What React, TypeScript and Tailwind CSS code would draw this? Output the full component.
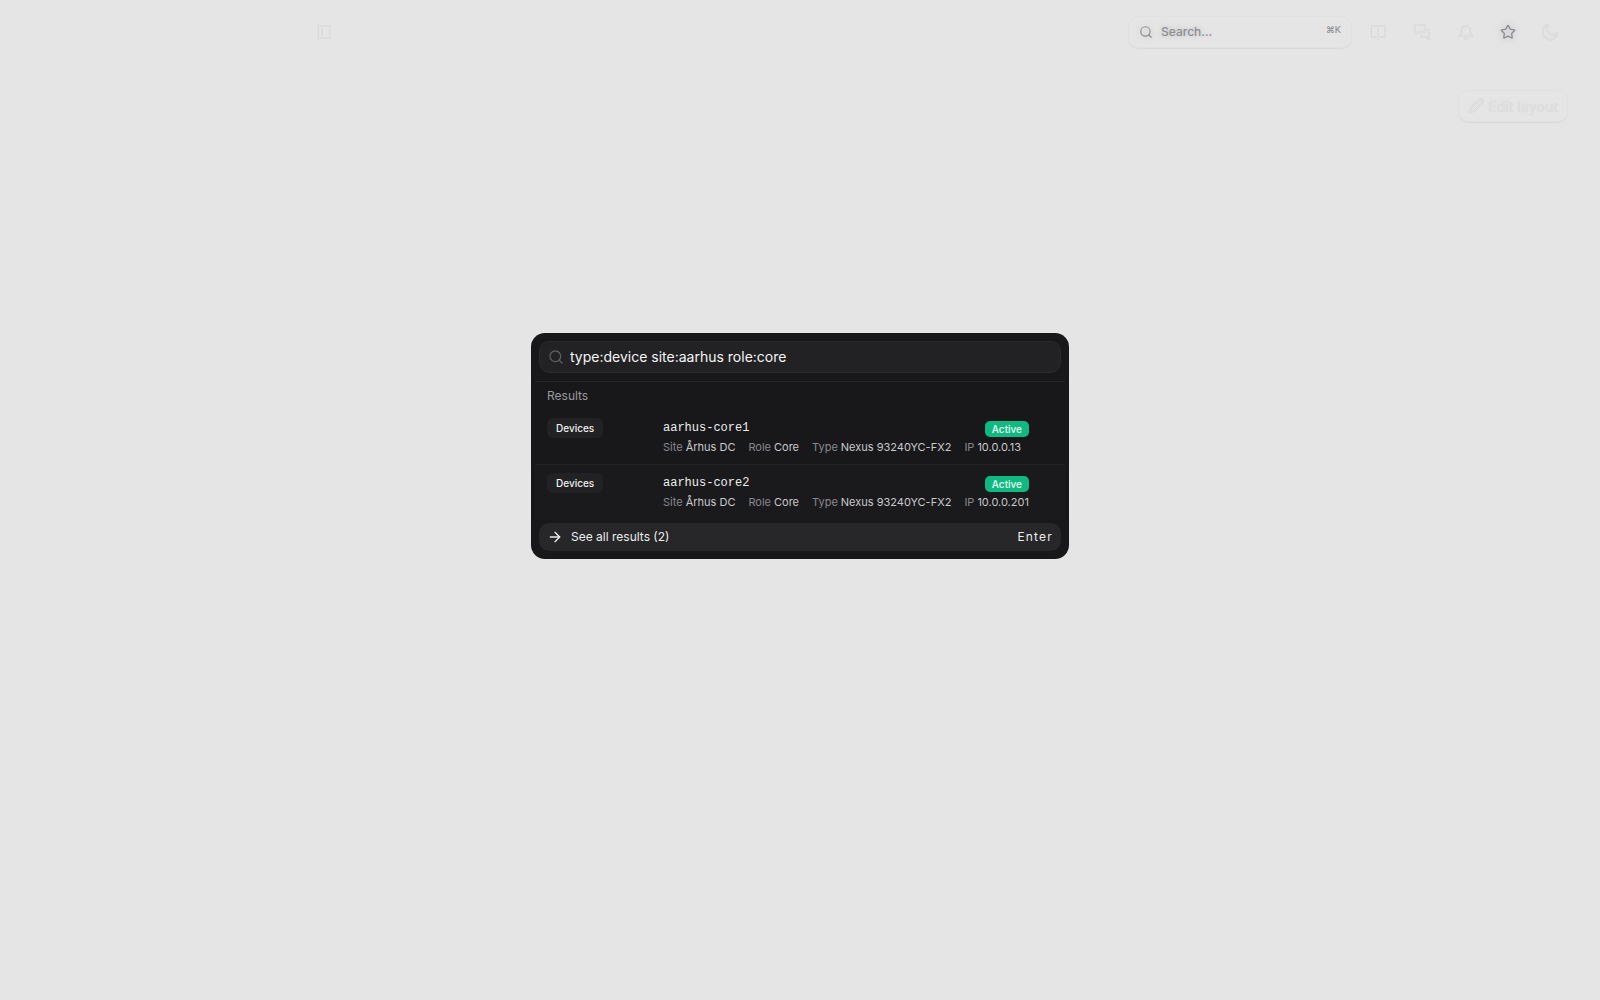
import { ArrowRight, Search, Star } from 'lucide-react';

interface Device {
  name: string;
  status: string;
  fields: { label: string; value: string }[];
}

const DEVICES: Device[] = [
  {
    name: 'aarhus-core1',
    status: 'Active',
    fields: [
      { label: 'Site', value: 'Århus DC' },
      { label: 'Role', value: 'Core' },
      { label: 'Type', value: 'Nexus 93240YC-FX2' },
      { label: 'IP', value: '10.0.0.13' },
    ],
  },
  {
    name: 'aarhus-core2',
    status: 'Active',
    fields: [
      { label: 'Site', value: 'Århus DC' },
      { label: 'Role', value: 'Core' },
      { label: 'Type', value: 'Nexus 93240YC-FX2' },
      { label: 'IP', value: '10.0.0.201' },
    ],
  },
];

// Icon set of the dimmed page behind the dialog
const ICON_PATHS = {
  panel: ['M2 2h12v12H2z', 'M6 2v12'],
  book: ['M8 3v12', 'M1 2h6l1 1 1-1h6v11H9l-1 1-1-1H1z'],
  chat: [
    'M2 1h8a1 1 0 0 1 1 1v5a1 1 0 0 1-1 1H5l-3 2-1-1V2a1 1 0 0 1 1-1z',
    'M13 6h1a1 1 0 0 1 1 1v8l-2.5-2H8a1 1 0 0 1-1-1v-1',
  ],
  bell: ['M4 6a4 4 0 0 1 8 0c0 4 2 4 2.5 6h-13C2 10 4 10 4 6z', 'M6.5 14.5a1.6 1.6 0 0 0 3 0'],
  moon: ['M7 0.5a7.5 7.5 0 1 0 8.5 8.5 4.5 4.5 0 0 1-8.5-8.5z'],
  pencil: ['M2 14l1-4 8-8a1.8 1.8 0 0 1 3 3l-8 8z'],
};

// Drawn twice, so that only the edges of each stroke stand out
function GhostIcon({ name }: { name: keyof typeof ICON_PATHS }) {
  return (
    <svg
      viewBox="0 0 16 16"
      className="size-4 shrink-0 overflow-visible"
      fill="none"
      strokeLinecap="round"
      strokeLinejoin="round"
      aria-hidden="true"
    >
      {ICON_PATHS[name].map((d) => (
        <path key={d} d={d} stroke="#d5d5d5" strokeWidth="2" />
      ))}
      {ICON_PATHS[name].map((d) => (
        <path key={d} d={d} stroke="#e5e5e5" strokeWidth="1" />
      ))}
    </svg>
  );
}

const iconButton = 'flex size-9 items-center justify-center rounded-lg';

function Header() {
  return (
    <header className="flex h-16 items-center justify-between pr-8 pl-[306px]">
      <button type="button" aria-label="Toggle sidebar" className={iconButton}>
        <GhostIcon name="panel" />
      </button>
      <div className="flex items-center gap-2">
        <button
          type="button"
          className="flex h-8 w-56 items-center gap-2 rounded-[10px] border border-[#e1e1e1] px-[10px] text-[12px] font-medium text-[#8e8e92] shadow-2xs"
        >
          <Search className="size-[14px] drop-shadow-[0_0_3px_rgba(0,0,0,0.15)]" />
          <span className="text-shadow-[0_0_6px_rgba(0,0,0,0.2)]">Search...</span>
          <kbd className="mb-1 ml-auto font-['Inter',sans-serif] text-[9px]">⌘K</kbd>
        </button>
        <button type="button" aria-label="Documentation" className={iconButton}>
          <GhostIcon name="book" />
        </button>
        <button type="button" aria-label="Messages" className={iconButton}>
          <GhostIcon name="chat" />
        </button>
        <div className="flex items-center gap-1.5">
          <button type="button" aria-label="Notifications" className={iconButton}>
            <GhostIcon name="bell" />
          </button>
          <button type="button" aria-label="Favourites" className={iconButton}>
            <Star className="size-4 text-[#8a8a92] drop-shadow-[0_0_4px_rgba(0,0,0,0.2)]" />
          </button>
          <button type="button" aria-label="Dark mode" className={iconButton}>
            <GhostIcon name="moon" />
          </button>
        </div>
      </div>
    </header>
  );
}

function DeviceRow({ device }: { device: Device }) {
  return (
    <li className="flex h-[55px] border-b border-[#222225] px-3 pt-2 last:border-b-0 last:bg-[#1a1a1c]">
      <div className="w-[116px] shrink-0">
        <span className="flex h-5 w-fit items-center rounded-md bg-[#222224] px-[9px] text-[10px] font-medium text-[#f0f0f0]">
          Devices
        </span>
      </div>
      <div className="min-w-0 flex-1 pt-px pr-6">
        <div className="flex h-[18px] items-center justify-between">
          <span className="font-['Liberation_Mono',monospace] text-[12px] text-[#ededee]">{device.name}</span>
          <span className="mt-0.5 flex h-4 items-center rounded-[5px] bg-[#10b981] px-[7px] text-[10px] font-medium text-[#e9fff6]">
            {device.status}
          </span>
        </div>
        <dl className="flex gap-[13px] text-[11px] leading-5 whitespace-nowrap">
          {device.fields.map((field) => (
            <div key={field.label} className="flex gap-[3px]">
              <dt className="text-[#88888d]">{field.label}</dt>
              <dd className="text-[#c9c9cc]">{field.value}</dd>
            </div>
          ))}
        </dl>
      </div>
    </li>
  );
}

function SearchDialog() {
  return (
    <div
      role="dialog"
      aria-label="Search"
      className="fixed top-1/3 left-1/2 w-[538px] max-w-full -translate-x-1/2 rounded-[14px] bg-[#18181a] p-2"
    >
      <label className="flex h-8 items-center gap-1.5 rounded-[10px] border border-[#29292b] bg-[#222224] px-2">
        <Search className="size-4 text-[#5d5d62]" />
        <input
          type="text"
          aria-label="Search query"
          defaultValue="type:device site:aarhus role:core"
          className="h-5 min-w-0 flex-1 bg-transparent text-[14px] leading-5 text-[#f5f5f5] outline-none"
        />
      </label>
      <div className="-mx-1 mt-2 border-t border-[#262629]">
        <h2 className="px-3 pt-1 text-[12px] leading-5 text-[#98989d]">Results</h2>
        <ul className="pt-1">
          {DEVICES.map((device) => (
            <DeviceRow key={device.name} device={device} />
          ))}
        </ul>
      </div>
      <button
        type="button"
        className="mt-[3px] flex h-7 w-full items-center gap-2 rounded-[10px] bg-[#272729] px-2 text-[12px] text-[#ededee]"
      >
        <ArrowRight className="size-4" />
        See all results (2)
        <span className="ml-auto tracking-widest">Enter</span>
      </button>
    </div>
  );
}

export default function App() {
  return (
    <div className="min-h-screen bg-[#e5e5e5] font-['Inter',sans-serif]">
      <Header />
      <main className="flex justify-end px-8 pt-[26px]">
        <button
          type="button"
          className="flex h-8 items-center gap-1 rounded-[10px] border border-[#e1e1e1] px-[9px] text-[14px] font-medium text-[#dfdfdf] shadow-2xs text-shadow-[0_0_1px_#d4d4d4]"
        >
          <GhostIcon name="pencil" />
          Edit layout
        </button>
      </main>
      <SearchDialog />
    </div>
  );
}
